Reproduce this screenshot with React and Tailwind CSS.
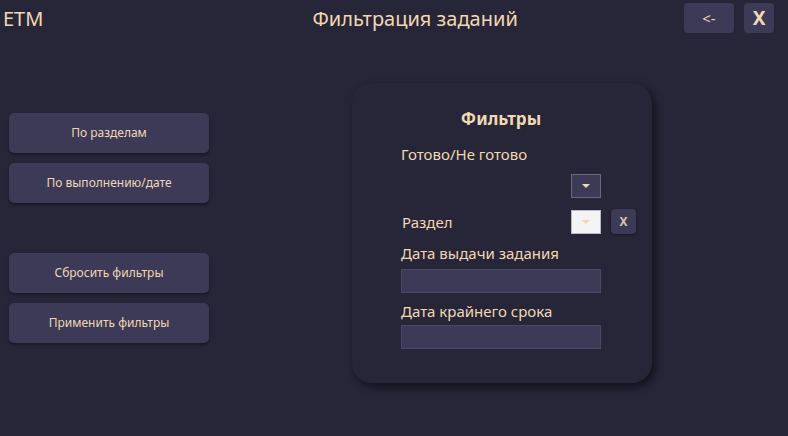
export default function App() {
  const font = { fontFamily: '"Noto Sans", "Open Sans", sans-serif' };
  const sideBtn =
    "flex h-[40px] w-[200px] items-center justify-center rounded-[5px] bg-[#3c3a56] text-[12px] text-[#f2d8b2] shadow-[0_2px_3px_rgba(0,0,0,0.35)]";

  return (
    <div
      className="h-[436px] w-[788px] overflow-hidden bg-[#272538] text-[#f2d8b2]"
      style={font}
    >
      <header className="flex h-[36px] items-start">
        <div className="pl-[3px] pt-[5px] text-[20px] leading-[28px]">ETM</div>
        <div className="flex-1 pl-[269px] pt-[5px] text-[20px] leading-[28px]">
          Фильтрация заданий
        </div>
        <div className="flex gap-[10px] pr-[14px] pt-[3px]">
          <button className="flex h-[30px] w-[50px] items-center justify-center rounded-[4px] bg-[#3c3a56] text-[15px] text-[#f2d8b2]">
            &lt;-
          </button>
          <button className="flex h-[30px] w-[30px] items-center justify-center rounded-[4px] bg-[#3c3a56] text-[19px] font-bold text-[#f2d8b2]">
            X
          </button>
        </div>
      </header>

      <main className="flex items-start">
        <div className="ml-[9px] mt-[77px] flex flex-col">
          <button className={sideBtn}>По разделам</button>
          <button className={sideBtn + " mt-[10px]"}>По выполнению/дате</button>
          <button className={sideBtn + " mt-[50px]"}>Сбросить фильтры</button>
          <button className={sideBtn + " mt-[10px]"}>Применить фильтры</button>
        </div>

        <section className="ml-[143px] mt-[47px] flex h-[300px] w-[300px] flex-col rounded-[20px] bg-[#272538] pl-[49px] pr-[51px] shadow-[3px_4px_8px_rgba(0,0,0,0.55)]">
          <h2 className="mt-[24px] text-center text-[17px] font-bold leading-[24px]">
            Фильтры
          </h2>
          <p className="mt-[13px] text-[15px] leading-[20px]">Готово/Не готово</p>
          <div className="mt-[10px] flex justify-end">
            <div className="flex h-[24px] w-[30px] items-center justify-center border border-[#6a6878] bg-[#3c3a56]">
              <svg width="8" height="4" viewBox="0 0 8 4">
                <path d="M0 0h8L4 4z" fill="#f2d8b2" />
              </svg>
            </div>
          </div>
          <div className="mt-[11px] flex items-center">
            <span className="flex-1 pl-[1px] text-[15px] leading-[24px]">Раздел</span>
            <div className="flex h-[24px] w-[30px] items-center justify-center border border-[#b8b8be] bg-[#f4f4f4]">
              <svg width="8" height="4" viewBox="0 0 8 4">
                <path d="M0 0h8L4 4z" fill="#f2d8b2" />
              </svg>
            </div>
            <div className="-mr-[35px] ml-[10px] flex h-[25px] w-[25px] items-center justify-center rounded-[4px] bg-[#3c3a56] text-[12px] font-bold text-[#d9c3a8] shadow-[0_1px_3px_rgba(0,0,0,0.5)]">
              X
            </div>
          </div>
          <p className="mt-[8px] text-[15px] leading-[22px]">Дата выдачи задания</p>
          <div className="mt-[5px] h-[24px] w-[200px] border border-[#4a4864] bg-[#3c3a56]" />
          <p className="mt-[7px] text-[15px] leading-[22px]">Дата крайнего срока</p>
          <div className="mt-[3px] h-[24px] w-[200px] border border-[#4a4864] bg-[#3c3a56]" />
        </section>
      </main>
    </div>
  );
}
